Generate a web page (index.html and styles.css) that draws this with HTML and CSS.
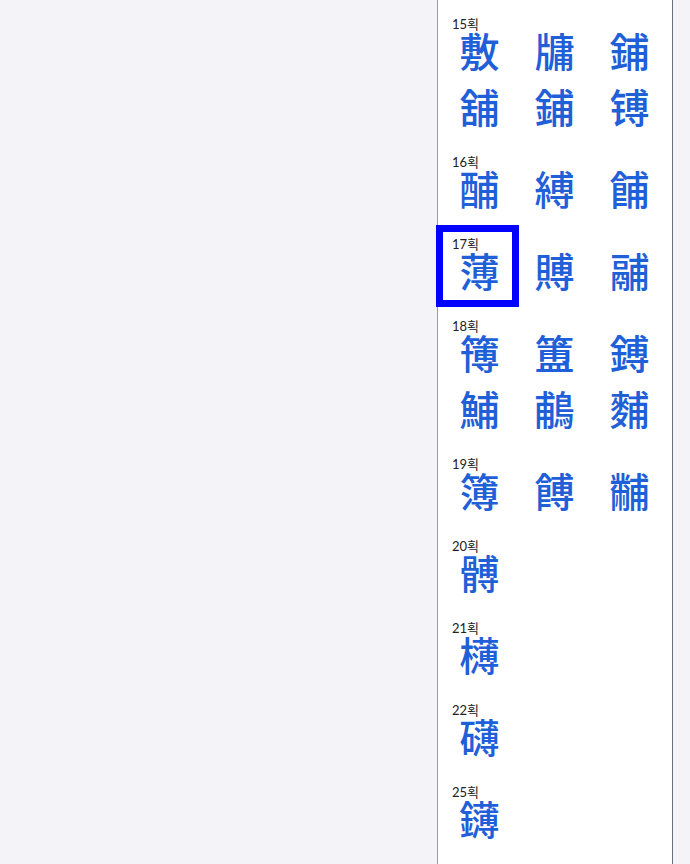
FILE: index.html
```html
<!DOCTYPE html>
<html lang="ko">
<head>
  <meta charset="UTF-8">
  <meta name="viewport" content="width=device-width, initial-scale=1.0">
  <title>부수별 한자</title>
  <link rel="stylesheet" href="styles.css">
</head>
<body>

  <div class="page">
    <div class="main"></div>

    <!-- Character list by stroke count -->
    <div class="side-panel" id="charList"></div>

    <div class="edge"></div>
  </div>

  <script>
    // Characters grouped by stroke count
    const groups = [
      { strokes: 15, chars: ['敷', '牗', '鋪', '舖', '鋪', '镈'] },
      { strokes: 16, chars: ['酺', '縛', '餔'] },
      { strokes: 17, chars: ['薄', '賻', '鬴'] },
      { strokes: 18, chars: ['簙', '簠', '鎛', '鯆', '鵏', '麱'] },
      { strokes: 19, chars: ['簿', '餺', '黼'] },
      { strokes: 20, chars: ['髆'] },
      { strokes: 21, chars: ['欂'] },
      { strokes: 22, chars: ['礴'] },
      { strokes: 25, chars: ['鑮'] }
    ];

    const selected = '薄';

    function renderList() {
      const list = document.getElementById('charList');
      list.innerHTML = '';

      groups.forEach(group => {
        const groupElement = document.createElement('div');
        groupElement.classList.add('stroke-group');

        group.chars.forEach((ch, index) => {
          const cell = document.createElement('div');
          cell.classList.add('char-cell');
          if (ch === selected) cell.classList.add('selected');

          // first cell carries the stroke count label
          if (index === 0) {
            cell.innerHTML = `<span class="stroke-label">${group.strokes}획</span>`;
          }
          cell.innerHTML += `<a class="char" href="#">${ch}</a>`;
          groupElement.appendChild(cell);
        });

        list.appendChild(groupElement);
      });
    }

    renderList();
  </script>

</body>
</html>
```

FILE: styles.css
```css
/* Basic page layout */
body {
  margin: 0;
  background-color: #f4f4f8;
  font-family: "Lato", "Noto Sans CJK KR", sans-serif;
}

.page {
  display: flex;
  min-height: 100vh;
}

.main {
  flex: 1;
}

.edge {
  width: 17px;
}

/* Character list */
.side-panel {
  width: 225px;
  padding: 5px 5px 0 4px;
  background-color: #fff;
  border-left: 1px solid #9c9ca8;
  border-right: 1px solid #6c6f80;
}

.stroke-group {
  display: grid;
  grid-template-columns: repeat(3, 75px);
  align-items: end;
  padding: 13px 0 1px;
}

.char-cell {
  position: relative;
}

.stroke-label {
  display: block;
  height: 12px;
  padding-left: 10px;
  font-size: 13px;
  line-height: 12px;
  color: #222;
}

.char {
  display: block;
  height: 40px;
  padding-bottom: 16px;
  text-align: center;
  font-family: "Noto Sans CJK KR", sans-serif;
  font-size: 40px;
  font-weight: 500;
  line-height: 40px;
  color: #1f5fd8;
  text-decoration: none;
}

/* Current character */
.char-cell.selected::after {
  content: "";
  position: absolute;
  top: -13px;
  left: -6px;
  right: -2px;
  bottom: -1px;
  border: 7px solid #0000ff;
}
```
